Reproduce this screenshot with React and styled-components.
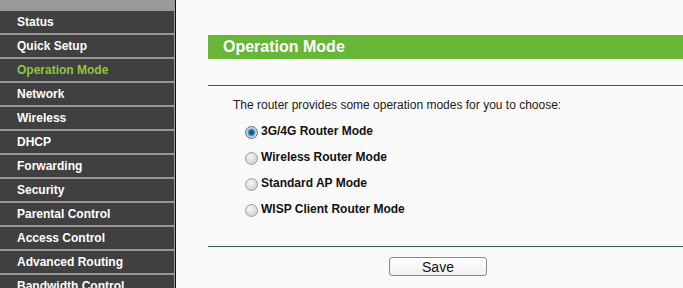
import React, { useState } from "react";
import styled, { createGlobalStyle } from "styled-components";

const GlobalStyle = createGlobalStyle`
  html, body {
    margin: 0;
    padding: 0;
    background: #fafafa;
  }
  body {
    font-family: "Liberation Sans", Arial, sans-serif;
    overflow: hidden;
  }
`;

const menu = [
  "Status",
  "Quick Setup",
  "Operation Mode",
  "Network",
  "Wireless",
  "DHCP",
  "Forwarding",
  "Security",
  "Parental Control",
  "Access Control",
  "Advanced Routing",
  "Bandwidth Control",
];

const modes = [
  "3G/4G Router Mode",
  "Wireless Router Mode",
  "Standard AP Mode",
  "WISP Client Router Mode",
];

const App = () => {
  const [mode, setMode] = useState(0);

  return (
    <Page>
      <GlobalStyle />
      <Sidebar>
        {menu.map((item) => (
          <MenuItem key={item} $active={item === "Operation Mode"}>
            {item}
          </MenuItem>
        ))}
      </Sidebar>
      <Main>
        <TitleBar>Operation Mode</TitleBar>
        <Divider />
        <Intro>The router provides some operation modes for you to choose:</Intro>
        {modes.map((m, i) => (
          <ModeRow key={m}>
            <Radio
              type="radio"
              name="mode"
              checked={mode === i}
              onChange={() => setMode(i)}
            />
            {m}
          </ModeRow>
        ))}
        <Divider $bottom />
        <ButtonRow>
          <SaveButton>Save</SaveButton>
        </ButtonRow>
      </Main>
    </Page>
  );
};

const Page = styled.div`
  display: flex;
  height: 288px;
  overflow: hidden;
`;

const Sidebar = styled.nav`
  width: 174px;
  flex-shrink: 0;
  background: #9a9a9a;
  border-right: 1px solid #9a9a9a;
  box-shadow: 1px 0 0 #111;
  margin-right: 1px;
  padding-top: 11px;
  display: flex;
  flex-direction: column;
  gap: 2px;
`;

const MenuItem = styled.div`
  height: 22px;
  line-height: 22px;
  flex-shrink: 0;
  background: #404040;
  padding-left: 17px;
  font-size: 12px;
  font-weight: bold;
  color: ${(p) => (p.$active ? "#8fc53f" : "#ffffff")};
  white-space: nowrap;
`;

const Main = styled.main`
  flex: 1;
  padding-left: 32px;
  padding-top: 35px;
  display: flex;
  flex-direction: column;
`;

const TitleBar = styled.h1`
  margin: 0;
  height: 24px;
  line-height: 24px;
  background: #67b637;
  color: #ffffff;
  font-size: 16px;
  font-weight: bold;
  padding-left: 15px;
`;

const Divider = styled.div`
  height: 1px;
  background: #2e6a4c;
  margin-top: ${(p) => (p.$bottom ? "24px" : "26px")};
  margin-bottom: ${(p) => (p.$bottom ? "10px" : "6px")};
`;

const Intro = styled.p`
  margin: 0;
  height: 26px;
  line-height: 26px;
  padding-left: 25px;
  font-size: 12px;
  color: #1a1a1a;
`;

const ModeRow = styled.label`
  display: flex;
  align-items: center;
  height: 26px;
  padding-left: 37px;
  font-size: 12px;
  font-weight: bold;
  color: #111;
`;

const Radio = styled.input`
  appearance: none;
  -webkit-appearance: none;
  margin: 3px 3px 0 0;
  width: 13px;
  height: 13px;
  border-radius: 50%;
  border: 1px solid #9c9c9c;
  background: radial-gradient(circle at 40% 35%, #f6f6f6 0%, #dcdcdc 55%, #c2c2c2 100%);
  box-sizing: border-box;
  &:checked {
    border-color: #5f7286;
    background: radial-gradient(circle at 50% 50%, #0c3a64 0, #1a6aa3 2px, #5aa0d4 3.5px, #d4d9de 4.5px, #b4bac2 100%);
  }
`;

const ButtonRow = styled.div`
  padding-left: 181px;
`;

const SaveButton = styled.button`
  width: 98px;
  height: 19px;
  padding: 0;
  border: 1px solid #8a8a8a;
  border-radius: 3px;
  background: linear-gradient(#ffffff, #f0f0f0);
  font-family: "Liberation Sans", Arial, sans-serif;
  font-size: 14px;
  line-height: 19px;
  color: #111;
`;

export default App;
